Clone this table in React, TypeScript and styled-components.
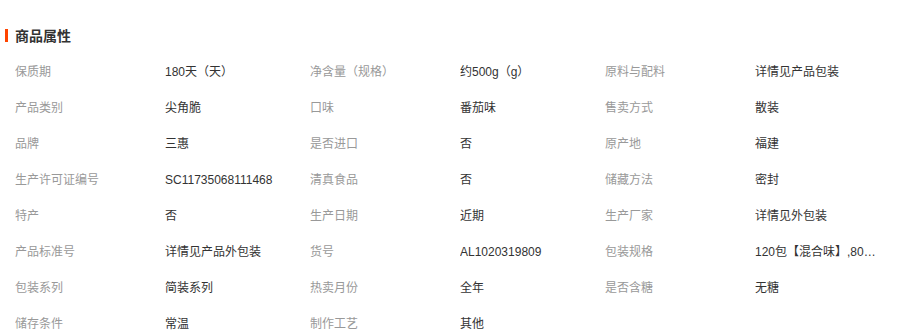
import React from "react";
import styled, { createGlobalStyle } from "styled-components";

const GlobalStyle = createGlobalStyle`
  body {
    margin: 0;
    background: #fff;
    font-family: "Liberation Sans", "Noto Sans CJK SC", sans-serif;
  }
`;

const Panel = styled.section`
  width: 902px;
`;

const Heading = styled.h3`
  display: flex;
  align-items: center;
  gap: 7px;
  margin: 27px 0 11px 5px;
  height: 16px;
  font-size: 14px;
  font-weight: bold;
  color: #333;

  &::before {
    content: "";
    width: 3px;
    height: 13px;
    background: #ff4400;
  }
`;

const Table = styled.div`
  display: grid;
  grid-template-columns: 150px 145px 150px 145px 150px 145px;
  padding-left: 15px;
`;

const Cell = styled.div<{ $label?: boolean }>`
  height: 36px;
  line-height: 36px;
  font-size: 12px;
  color: ${(p) => (p.$label ? "#999" : "#333")};
  padding-right: ${(p) => (p.$label ? "0" : "20px")};
  white-space: nowrap;
  overflow: hidden;
  text-overflow: ellipsis;
`;

const attrs: [string, string][] = [
  ["保质期", "180天（天）"],
  ["净含量（规格）", "约500g（g）"],
  ["原料与配料", "详情见产品包装"],
  ["产品类别", "尖角脆"],
  ["口味", "番茄味"],
  ["售卖方式", "散装"],
  ["品牌", "三惠"],
  ["是否进口", "否"],
  ["原产地", "福建"],
  ["生产许可证编号", "SC11735068111468"],
  ["清真食品", "否"],
  ["储藏方法", "密封"],
  ["特产", "否"],
  ["生产日期", "近期"],
  ["生产厂家", "详情见外包装"],
  ["产品标准号", "详情见产品外包装"],
  ["货号", "AL1020319809"],
  ["包装规格", "120包【混合味】,80包【番茄味】"],
  ["包装系列", "简装系列"],
  ["热卖月份", "全年"],
  ["是否含糖", "无糖"],
  ["储存条件", "常温"],
  ["制作工艺", "其他"],
];

const App: React.FunctionComponent = () => (
  <Panel>
    <GlobalStyle />
    <Heading>商品属性</Heading>
    <Table>
      {attrs.map(([label, value]) => (
        <React.Fragment key={label}>
          <Cell $label>{label}</Cell>
          <Cell title={value}>{value}</Cell>
        </React.Fragment>
      ))}
    </Table>
  </Panel>
);

export default App;
